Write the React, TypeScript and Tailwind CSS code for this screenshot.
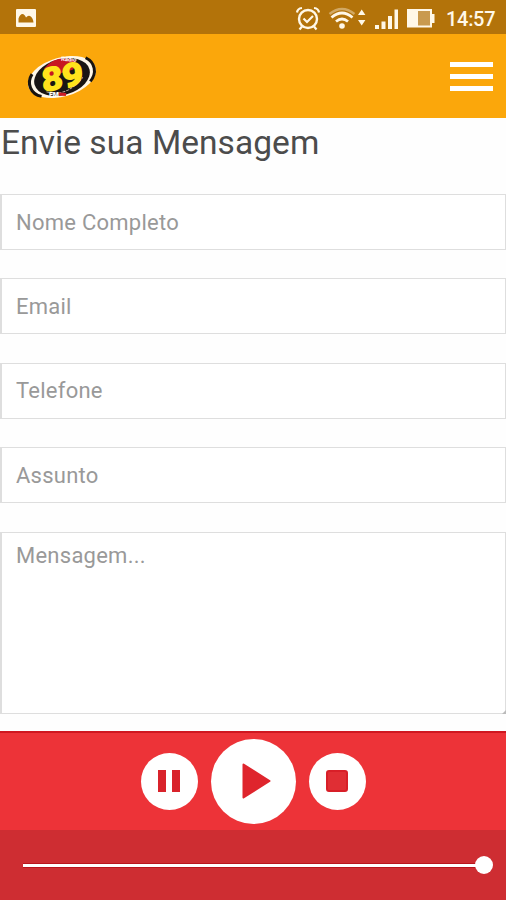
import { useState } from 'react'

const fields = [
  { name: 'nome', placeholder: 'Nome Completo' },
  { name: 'email', placeholder: 'Email' },
  { name: 'telefone', placeholder: 'Telefone' },
  { name: 'assunto', placeholder: 'Assunto' }
]

function StatusBar() {
  return (
    <div className="flex h-[34px] shrink-0 items-center bg-[#b3730a] text-[#fff8e8]">
      <svg className="mt-[2px] ml-4 h-[18px] w-5" viewBox="0 0 20 18">
        <rect width="20" height="18" rx="1" fill="currentColor" />
        <path d="M2.500 13.500V9.500Q4 5 6.500 5Q8.500 5 10 8.500Q12 6 14 7Q17 8.500 17.500 13.500Z" fill="#b3730a" />
      </svg>

      {/* Alarm, wifi, signal and battery */}
      <svg className="ml-[258px] h-[34px] w-[146px] shrink-0" viewBox="294 0 146 34" fill="none" stroke="currentColor">
        <circle cx="308" cy="19" r="9" strokeWidth="2.4" />
        <path d="M303.5 18.5L307 22L313 16" strokeWidth="2.2" />
        <path d="M297 12.5Q297.5 8.5 302 8M314 8Q318.5 8.5 319 12.5M302 26.5L299.5 29.5M314 26.5L316.5 29.5" strokeWidth="2.2" />
        <path d="M329.500 14Q342 4 354.500 14" strokeWidth="2.4" opacity="0.4" />
        <path d="M331.500 17.500Q342 8.500 352.500 17.500M336 21.500Q342 16.500 348 21.500" strokeWidth="2.8" />
        <circle cx="342" cy="26" r="2.8" fill="currentColor" stroke="none" />
        <path d="M358 15L361.7 9.500L365.4 15ZM358 20L361.7 25.500L365.4 20Z" fill="currentColor" stroke="none" />
        <path d="M375 25h4v4h-4zM381.5 21.5h4V29h-4zM388 16h4v13h-4zM394.5 9.5h3.5V29h-3.5z" fill="currentColor" stroke="none" />
        <rect x="408" y="10" width="23" height="16.5" fill="#c99a4e" strokeWidth="2" />
        <path d="M408 10h10v16.500H408zM432 14h2.500v9H432z" fill="currentColor" stroke="none" />
      </svg>
      <span className="mt-1 ml-[6px] text-[20px] leading-none font-medium tracking-[-0.3px]">14:57</span>
    </div>
  )
}

function Logo() {
  return (
    <svg className="h-[50px] w-[74px]" viewBox="0 0 74 50">
      <g transform="rotate(-16 37 26)">
        <ellipse cx="37" cy="26" rx="35" ry="19.5" fill="#fff7e8" />
        <path d="M9 15C1 22 2 34 12 39M65 14C73 21 72 32 63 38" fill="none" stroke="#171310" strokeWidth="3" />
        <ellipse cx="37" cy="26" rx="28.5" ry="18" fill="#191514" />
        <path d="M22 13Q38 2 55 14L50 22L25 22Z" fill="#c81722" />
        <path d="M18 36Q36 47 57 32" fill="none" stroke="#b9a89b" strokeWidth="1" strokeDasharray="3 1" />
      </g>
      <text
        transform="translate(18 41) rotate(-11) skewX(-5)"
        textLength="42"
        lengthAdjust="spacingAndGlyphs"
        fontSize="32"
        fontWeight="700"
        fill="#ffe31c"
        stroke="#ffe31c"
        strokeWidth="1.6"
      >
        89
      </text>
      <text x="36" y="10" fontSize="6" fontWeight="700" fill="#fff" transform="rotate(4 40 9)">Rádio</text>
      <text x="24" y="46" fontSize="7" fontWeight="900" fill="#fff">FM</text>
      <path d="M34 43l7 0.500" stroke="#cc1b25" strokeWidth="3" />
    </svg>
  )
}

export default function App() {
  const [volume] = useState(100)

  return (
    <div className="flex h-[900px] w-full flex-col overflow-hidden bg-[#fefefe] font-['Roboto',sans-serif]">
      <StatusBar />

      {/* Header */}
      <header className="flex h-[84px] shrink-0 items-center justify-between bg-[#fba70b] pr-[13px] pl-[25px]">
        <Logo />
        <button aria-label="Menu" className="flex w-[43px] flex-col gap-[7px]">
          <span className="h-[5px] bg-white" />
          <span className="h-[5px] bg-white" />
          <span className="h-[5px] bg-white" />
        </button>
      </header>

      {/* Contact form */}
      <main className="flex h-[613px] shrink-0 flex-col">
        <h1 className="h-[76px] pt-[5px] pl-px text-[33.5px] leading-[40px] font-normal tracking-[0.06px] whitespace-nowrap text-[#4c4c4c]">
          Envie sua Mensagem
        </h1>
        <form className="flex flex-col gap-[28.4px]">
          {fields.map((field) => (
            <input
              key={field.name}
              name={field.name}
              placeholder={field.placeholder}
              className="h-14 w-full border border-l-2 border-[#dedede] bg-white px-[14px] text-[22px] tracking-[0.25px] outline-none placeholder:text-[#999]"
            />
          ))}
          <div className="relative">
            <textarea
              name="mensagem"
              placeholder="Mensagem..."
              className="block h-[182px] w-full resize-none border border-l-2 border-[#dedede] bg-white px-[14px] pt-[8px] text-[22px] leading-[30px] tracking-[0.25px] outline-none placeholder:text-[#999]"
            />
            <svg className="absolute right-0 bottom-0 size-1" viewBox="0 0 4 4">
              <path d="M4 0V4H0Z" fill="#bbb" />
            </svg>
          </div>
        </form>
      </main>

      {/* Player */}
      <footer className="flex grow flex-col">
        <div className="flex h-[99px] items-center justify-center gap-[13px] border-t-2 border-[#cf1720] bg-[#ed3338] pb-px">
          <button aria-label="Pausar" className="flex size-[57px] items-center justify-center gap-[6px] rounded-full bg-white">
            <span className="h-[22px] w-2 bg-[#d9232b]" />
            <span className="h-[22px] w-2 bg-[#d9232b]" />
          </button>
          <button aria-label="Tocar" className="flex size-[85px] items-center justify-center rounded-full bg-white">
            <svg className="ml-[7px] h-9 w-[29px]" viewBox="0 0 29 36">
              <path d="M1.500 1.500L27.500 18L1.500 34.500Z" fill="#df252d" stroke="#df252d" strokeWidth="2" strokeLinejoin="round" />
            </svg>
          </button>
          <button aria-label="Parar" className="flex size-[57px] items-center justify-center rounded-full bg-white">
            <span className="size-[22px] rounded-[3px] border-2 border-[#d81f28] bg-[#e02e34]" />
          </button>
        </div>
        <div className="flex h-[70px] items-center bg-[#ce2d32] pr-[13px] pl-[23px]">
          <div className="flex h-[18px] w-full items-center">
            <div className="h-[5px] border-y border-[#b9151d] bg-white" style={{ width: `calc(${volume}% - 16px)` }} />
            <div className="-ml-px size-[18px] shrink-0 rounded-full bg-white" />
          </div>
        </div>
      </footer>
    </div>
  )
}
